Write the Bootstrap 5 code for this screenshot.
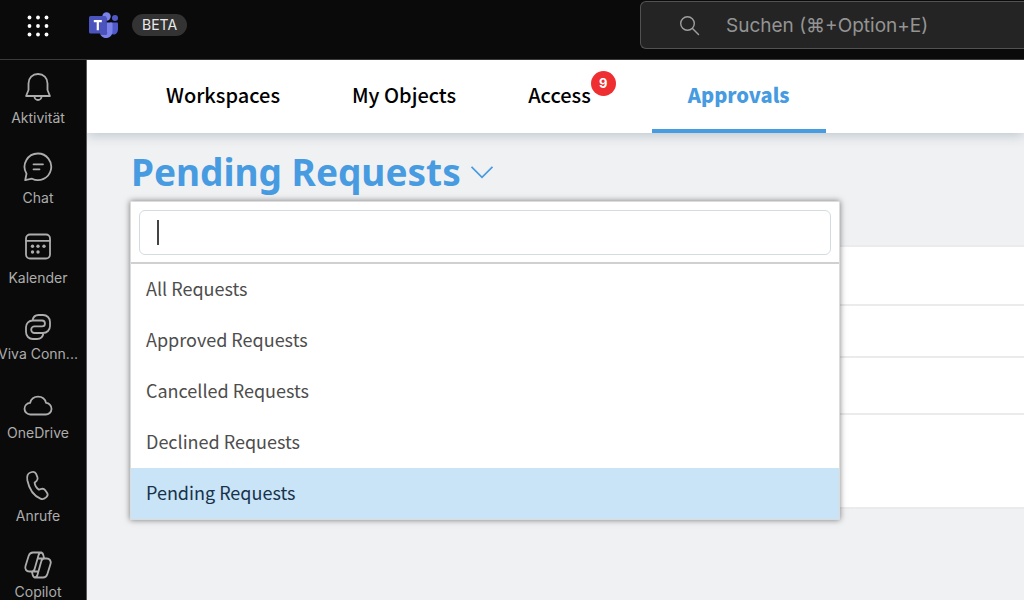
<!DOCTYPE html>
<html lang="de">
<head>
<meta charset="utf-8">
<meta name="viewport" content="width=device-width, initial-scale=1">
<title>Approvals</title>
<link href="https://cdn.jsdelivr.net/npm/bootstrap@5.3.0/dist/css/bootstrap.min.css" rel="stylesheet">
<style>
  :root { --accent: #479be1; --ui: Inter, "Liberation Sans", sans-serif; --content: "Noto Sans CJK SC", "Noto Sans", sans-serif; }
  body { background: #f0f1f3; font-family: var(--ui); }
  .top-bar { background: #0a0a0a; height: 60px; border-bottom: 1px solid #3a3a3a; padding-bottom: 9px; }
  .apps-btn { width: 76px; height: 48px; }
  .beta-pill { background: #333; color: #eaeaea; font-size: 14px; font-weight: 400; line-height: 22px; padding: 0 10px; }
  .search-box { width: 37.5%; min-width: 240px; height: 48px; background: #242424; border: 1px solid #525252; border-right: 0; border-radius: 6px 0 0 6px; padding-left: 38px; gap: 26px; }
  .search-box input { background: none; border: 0; outline: 0; padding: 2px 0 0; color: #fff; font: 19px/28px Inter, "DejaVu Sans", sans-serif; }
  .search-box input::placeholder { color: #949494; opacity: 1; }
  .side-rail { width: 87px; background: #0a0a0a; border-right: 1px solid #5a5a5a; padding-top: 11px; }
  .rail-link { width: 76px; height: 80px; color: #adadad; font-size: 14px; line-height: 16px; gap: 7px; white-space: nowrap; flex: none; }
  .rail-link:hover { color: #fff; }
  .rail-app { height: 79px; gap: 3px; }
  .rail-link svg { width: 32px; height: 32px; fill: none; stroke: currentColor; stroke-width: 1.8; stroke-linecap: round; stroke-linejoin: round; flex: none; }
  .tab-strip { background: #fff; height: 73px; padding-left: 43px; box-shadow: 0 2px 12px #b9c3c9; font-family: var(--content); z-index: 1; }
  .tab-strip .nav-link { color: #000; font-size: 20px; line-height: 30px; font-weight: 500; padding: 0 36px; border-bottom: 4px solid transparent; border-radius: 0; }
  .tab-strip .nav-link.active { color: var(--accent); font-weight: 900; border-bottom-color: var(--accent); }
  .count-dot { width: 25px; height: 25px; background: #ee2e31; font: 700 13px/25px Inter, sans-serif; padding: 0; margin-bottom: 22px; }
  .view-area { padding: 16px 0 0 44px; }
  .view-title { color: var(--accent); background: none; border: 0; padding: 0; gap: 10px; font: 700 37px/46px "Noto Sans", "Open Sans", sans-serif; }
  .view-menu { display: block; width: 710px; max-width: 100%; top: 52px; left: -1px; padding: 0; border: 1px solid #dcdcdc; border-radius: 0; box-shadow: 0 0 6px rgba(0,0,0,.5); font-family: var(--content); }
  .menu-search { padding: 8px 8px 7px; border-bottom: 2px solid #d0d0d0; }
  .menu-search .form-control { height: 45px; border: 1px solid #d3dde0; border-radius: 6px; box-shadow: none; padding: 0 16px; }
  .text-caret { width: 2px; height: 25px; left: 26px; top: 18px; background: #444; }
  .view-menu .dropdown-item { color: #4d4d4d; font-size: 18px; font-weight: 400; line-height: 28px; padding: 10px 15px 13px; }
  .view-menu .dropdown-item.active { background: #c8e4f6; color: #17324b; }
  .request-rows { margin-top: 50px; border-block: 2px solid #ebebeb; background: #fff; }
  .request-rows li { height: 52px; }
  .request-rows li + li { border-top: 2px solid #ebebeb; }
  .request-rows .row-tall { height: 57px; }
  .request-rows .row-last { height: 94px; }
</style>
</head>
<body class="vh-100 overflow-hidden d-flex flex-column">
<header class="top-bar d-flex align-items-center flex-shrink-0">
  <button class="apps-btn btn p-0 border-0" type="button" aria-label="Apps">
    <svg width="24" height="24" viewBox="0 0 24 24" fill="#fff"><circle cx="3.500" cy="3.500" r="1.900"/><circle cx="12" cy="3.500" r="1.900"/><circle cx="20.500" cy="3.500" r="1.900"/><circle cx="3.500" cy="12" r="1.900"/><circle cx="12" cy="12" r="1.900"/><circle cx="20.500" cy="12" r="1.900"/><circle cx="3.500" cy="20.500" r="1.900"/><circle cx="12" cy="20.500" r="1.900"/><circle cx="20.500" cy="20.500" r="1.900"/></svg>
  </button>
  <svg class="mx-2 flex-shrink-0" width="40" height="28" viewBox="-1 0 40 28" aria-label="Teams" role="img">
    <circle cx="30" cy="7" r="3" fill="#5059c9"/>
    <path d="M25 11.500h7a1 1 0 0 1 1 1V18c0 3.500-2 5.500-4.500 5.500-2 0-3.500-1-3.500-2z" fill="#5059c9"/>
    <circle cx="21.500" cy="5.500" r="4.200" fill="#7b83eb"/>
    <path d="M15 11.500h11.500a1 1 0 0 1 1 1V20c0 4.500-3 7-6.500 7s-6-2.500-6-6z" fill="#7b83eb"/>
    <path d="M14 7h8v14a2 2 0 0 1-2 3h-4.500l-1-3z" fill="#373c91" opacity=".65"/>
    <rect x="4" y="5" width="17.500" height="17.500" rx="1.500" fill="#4b53bc"/>
    <path d="M8.800 10.200h8M12.800 10.200v9" fill="none" stroke="#fff" stroke-width="2.200"/>
  </svg>
  <span class="badge rounded-pill beta-pill">BETA</span>
  <label class="search-box d-flex align-items-center ms-auto">
    <svg class="flex-shrink-0" width="21" height="21" viewBox="0 0 21 21" fill="none" stroke="#a0a0a0" stroke-width="1.400" stroke-linecap="round"><circle cx="8.500" cy="8.500" r="6.800"/><path d="m13.500 13.500 6 6"/></svg>
    <input class="flex-grow-1" type="search" placeholder="Suchen (⌘+Option+E)" aria-label="Suchen">
  </label>
</header>
<div class="d-flex flex-grow-1 overflow-hidden">
  <nav class="side-rail d-flex flex-column flex-shrink-0 overflow-hidden" aria-label="Teams">
    <a href="#" class="rail-link d-flex flex-column align-items-center text-decoration-none">
      <svg viewBox="0 0 32 32"><path d="M16 3C10.500 3 6.500 7 6.500 12.500v6.500l-2.400 6h23.800l-2.400-6v-6.500C25.500 7 21.500 3 16 3zM12.500 25.500a3.500 3.500 0 0 0 7 0"/></svg>Aktivität</a>
    <a href="#" class="rail-link d-flex flex-column align-items-center text-decoration-none">
      <svg viewBox="0 0 32 32"><path d="M16 2.500a13.300 13.300 0 1 1-6 25.200L3.200 29.200l1.300-6.500A13.300 13.300 0 0 1 16 2.500zM11.500 13.300h9.500M11.500 18.300h6"/></svg>Chat</a>
    <a href="#" class="rail-link d-flex flex-column align-items-center text-decoration-none">
      <svg viewBox="0 0 32 32"><rect x="4" y="3.500" width="24" height="24" rx="4"/><path d="M4 9.800h24"/><g fill="currentColor" stroke="none"><circle cx="10.500" cy="15.300" r="1.700"/><circle cx="16" cy="15.300" r="1.700"/><circle cx="22" cy="15.300" r="1.700"/><circle cx="10.500" cy="21" r="1.700"/><circle cx="16" cy="21" r="1.700"/></g></svg>Kalender</a>
    <a href="#" class="rail-link rail-app d-flex flex-column align-items-center text-decoration-none">
      <svg viewBox="0 0 32 32"><path d="M10.500 9.500C11 6.300 13.500 4 16.700 4H21c4 0 7 3 7 7v4c0 4-3 7-7 7h-8.500a3.300 3.300 0 0 1 0-6.600H20a2.900 2.900 0 0 0 0-5.900h-9.200C7 9.500 4 12.300 4 16.300V21c0 4 3 7 6.800 7h4.200c3.500 0 6-2.500 6.500-6"/></svg>Viva Conn...</a>
    <a href="#" class="rail-link rail-app d-flex flex-column align-items-center text-decoration-none">
      <svg viewBox="0 0 32 32"><path d="M8.500 24.500a5.800 5.800 0 0 1-.4-11.600c1-3.700 4.200-6.200 8-6.200s7 2.500 7.900 6.200a5.800 5.800 0 0 1-.5 11.600z"/></svg>OneDrive</a>
    <a href="#" class="rail-link d-flex flex-column align-items-center text-decoration-none">
      <svg viewBox="0 0 32 32"><path d="m8.400 3.500 1.700-.5c1.800-.5 3.300.2 4 1.900l1.300 3.200c.6 1.400.2 2.700-.8 3.700l-2 1.900c.3 2.600 2.300 5.700 4.300 7l2.700-.8c1.300-.4 2.600 0 3.400 1.100l2 2.800c1 1.500.8 3-.4 4.100l-.9.8c-1.500 1.300-3.500 1.700-5.300.9C12.300 27 7.200 20 5.400 11.500 4.700 7.500 5.300 4.500 8.400 3.500z"/></svg>Anrufe</a>
    <a href="#" class="rail-link rail-app d-flex flex-column align-items-center text-decoration-none">
      <svg viewBox="0 0 32 32"><path d="M11.500 22.500H7.300c-3 0-4.700-2.500-3.800-5.500L6.700 6.800C7.400 4.600 9 3.500 11 3.500h8.500c-1.700 0-2.500 1-3 2.800l-3.800 13.500c-.5 2-1.500 2.700-3 2.700M20.500 9.500h4.200c3 0 4.700 2.500 3.800 5.500l-3.200 10.200c-.7 2.200-2.300 3.300-4.300 3.300h-8.500c1.700 0 2.500-1 3-2.800l3.800-13.500c.5-2 1.500-2.700 3-2.700M18.500 3.500c1.500 0 2.300.8 2.700 2.200l1 3.800h-6.500M13.500 28.500c-1.500 0-2.300-.8-2.700-2.200l-1-3.800h6.500"/></svg>Copilot</a>
  </nav>
  <main class="flex-grow-1 overflow-hidden">
    <nav class="nav tab-strip flex-nowrap position-relative" aria-label="Main">
      <a class="nav-link d-flex align-items-center text-nowrap" href="#">Workspaces</a>
      <a class="nav-link d-flex align-items-center text-nowrap" href="#">My Objects</a>
      <a class="nav-link d-flex align-items-center text-nowrap" href="#">Access<span class="badge rounded-circle count-dot">9</span></a>
      <a class="nav-link d-flex align-items-center text-nowrap active" href="#" aria-current="page">Approvals</a>
    </nav>
    <section class="view-area">
      <div class="position-relative">
        <button class="view-title d-flex align-items-center" type="button" aria-expanded="true">Pending Requests
          <svg width="22" height="13" viewBox="0 0 22 13" fill="none" stroke="currentColor" stroke-width="1.800"><path d="m.5.800 10.500 10.500L21.500.800"/></svg>
        </button>
        <div class="dropdown-menu view-menu">
          <div class="menu-search position-relative">
            <input class="form-control" type="text" aria-label="Search views">
            <span class="text-caret position-absolute"></span>
          </div>
          <a class="dropdown-item" href="#">All Requests</a>
          <a class="dropdown-item" href="#">Approved Requests</a>
          <a class="dropdown-item" href="#">Cancelled Requests</a>
          <a class="dropdown-item" href="#">Declined Requests</a>
          <a class="dropdown-item active" href="#">Pending Requests</a>
        </div>
      </div>
      <ul class="request-rows list-unstyled mb-0">
        <li class="row-tall"></li><li></li><li class="row-tall"></li><li class="row-last"></li>
      </ul>
    </section>
  </main>
</div>
<script src="https://cdn.jsdelivr.net/npm/bootstrap@5.3.0/dist/js/bootstrap.bundle.min.js"></script>
</body>
</html>
